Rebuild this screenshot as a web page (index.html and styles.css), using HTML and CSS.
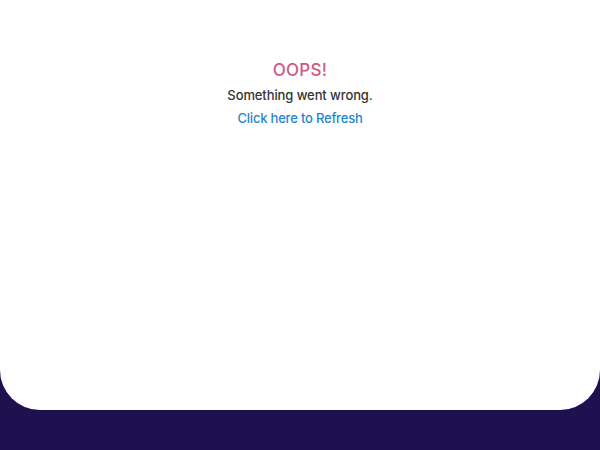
FILE: index.html
```html
<!DOCTYPE html>
<html>
<head>
<meta charset="utf-8">
<link rel="stylesheet" href="styles.css">
</head>
<body>
<div class="panel">
  <div class="error">
    <h1 class="title">OOPS!</h1>
    <p class="message">Something went wrong.</p>
    <a class="refresh" href="#">Click here to Refresh</a>
  </div>
</div>
</body>
</html>
```
FILE: styles.css
```css
html, body {
  margin: 0;
  padding: 0;
  height: 100%;
}
body {
  background: #1f1150;
  font-family: "Inter", "Open Sans", sans-serif;
}
.panel {
  background: #ffffff;
  height: 410px;
  border-radius: 0 0 40px 40px;
  box-sizing: border-box;
  padding-top: 59px;
}
.error {
  display: flex;
  flex-direction: column;
  align-items: center;
}
.title {
  margin: 0;
  font-size: 17px;
  font-weight: 500;
  line-height: 22px;
  color: #cc5a88;
  letter-spacing: 0.3px;
}
.message {
  margin: 5px 0 0;
  font-size: 13px;
  font-weight: 500;
  line-height: 18px;
  color: #333333;
  letter-spacing: -0.1px;
}
.refresh {
  margin-top: 5px;
  font-size: 13px;
  font-weight: 500;
  line-height: 18px;
  color: #1f86d0;
  text-decoration: none;
  letter-spacing: -0.2px;
}
```
